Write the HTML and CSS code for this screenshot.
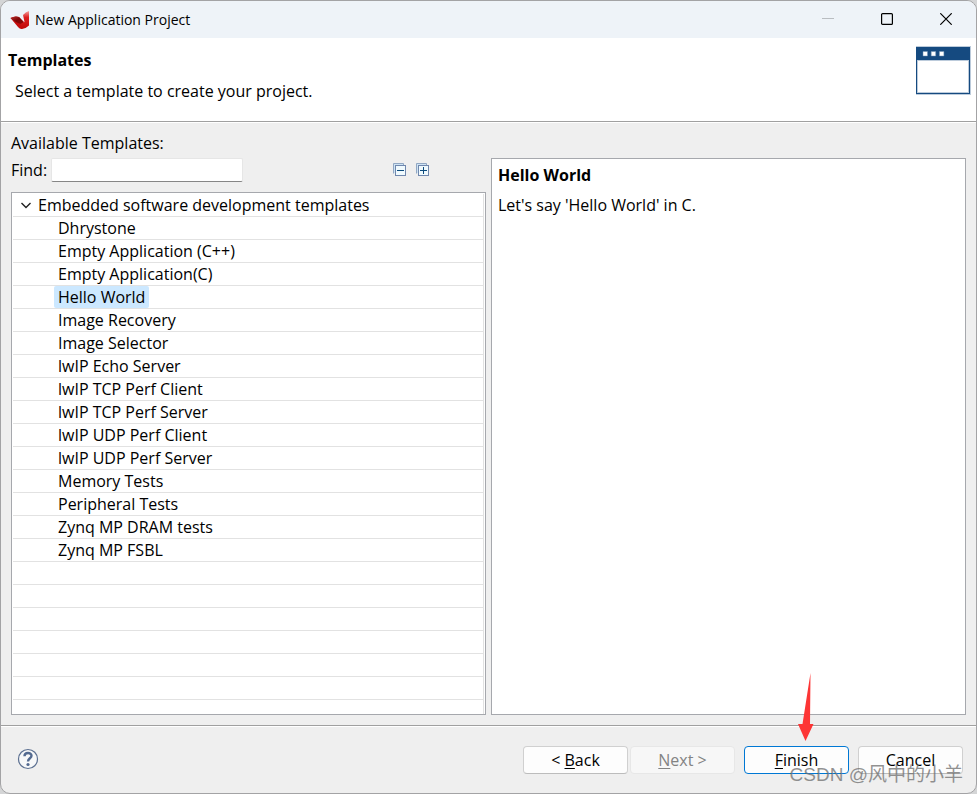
FILE: index.html
```html
<!DOCTYPE html>
<html lang="en">
<head>
<meta charset="utf-8">
<title>New Application Project</title>
<link rel="stylesheet" href="styles.css">
</head>
<body>
<div class="window">
  <header class="titlebar">
    <svg class="app-icon" width="20" height="20" viewBox="0 0 20 20" aria-hidden="true">
      <defs>
        <linearGradient id="red" x1="0" y1="0" x2="0" y2="1"><stop offset="0" stop-color="#f4a0a0"/><stop offset=".35" stop-color="#dc2020"/><stop offset="1" stop-color="#c00808"/></linearGradient>
        <linearGradient id="dark" x1="0" y1="0" x2="1" y2="1"><stop offset="0" stop-color="#b83030"/><stop offset=".5" stop-color="#7c0606"/><stop offset="1" stop-color="#900808"/></linearGradient>
      </defs>
      <path d="M.5 8 Q5 5.500 9 7 L14 12 L12 19 Q10 19.500 8 17Z" fill="#c40c0c"/>
      <path d="M.5 8 Q5 5.500 9 7 L13.500 12 L11 14 Q6 13 .5 8Z" fill="url(#dark)"/>
      <path d="M13 5 Q16 1.500 19 1 V15.500 Q16 18.500 12 19 L10.500 14 L14.500 12Z" fill="url(#red)"/>
    </svg>
    <span class="title">New Application Project</span>
    <div class="controls">
      <button class="control" aria-label="Minimize" disabled><svg width="12" height="12" viewBox="0 0 12 12"><path d="M0 5.500H12" stroke="#b9bdc1"/></svg></button>
      <button class="control" aria-label="Maximize"><svg width="12" height="12" viewBox="0 0 12 12"><rect x=".6" y=".6" width="10.800" height="10.800" rx="1" fill="none" stroke="#000" stroke-width="1.200"/></svg></button>
      <button class="control" aria-label="Close"><svg width="12" height="12" viewBox="0 0 12 12"><path d="M.3 .3L11.700 11.700M11.700 .3L.3 11.700" stroke="#000" stroke-width="1.200"/></svg></button>
    </div>
  </header>

  <section class="banner">
    <div>
      <h1>Templates</h1>
      <p>Select a template to create your project.</p>
    </div>
    <svg width="55" height="49" viewBox="0 0 55 49" aria-hidden="true">
      <rect width="55" height="49" fill="#bccbdb"/>
      <rect y="1" width="54" height="47" fill="#154a80"/>
      <rect x="1" y="14" width="52" height="33" fill="#bccbdb"/>
      <rect x="2" y="15" width="50" height="31" fill="#fff"/>
      <path d="M7 5.500h4.500v4.500H7zM15.200 5.500h4.500v4.500h-4.500zM23.400 5.500h4.500v4.500h-4.500z" fill="#fff" stroke="#6d8fb1" stroke-width=".5"/>
    </svg>
  </section>

  <main class="content">
    <h2>Available Templates:</h2>
    <div class="panes">
      <div class="chooser">
        <div class="toolbar">
          <label for="find">Find:</label>
          <input id="find" type="text">
          <div class="tools">
            <button class="tool" aria-label="Collapse all"><svg width="13" height="13" viewBox="0 0 13 13"><path d="M.5 10.500V.5H10.500V3" fill="#cfe4f4" stroke="#91a7c3"/><rect x="1" y="1" width="9" height="9" fill="#cfe4f4"/><rect x="2.500" y="2.500" width="10" height="10" fill="#f0fafe" stroke="#7087ad"/><path d="M4 7.500H11" stroke="#0b4a7c"/></svg></button>
            <button class="tool" aria-label="Expand all"><svg width="13" height="13" viewBox="0 0 13 13"><path d="M.5 10.500V.5H10.500V3" fill="#cfe4f4" stroke="#91a7c3"/><rect x="1" y="1" width="9" height="9" fill="#cfe4f4"/><rect x="2.500" y="2.500" width="10" height="10" fill="#f0fafe" stroke="#7087ad"/><path d="M4 7.500H11M7.500 4V11" stroke="#0b4a7c"/></svg></button>
          </div>
        </div>
        <ul class="tree" role="tree">
          <li role="treeitem" aria-expanded="true">
            <div class="group"><svg width="12" height="12" viewBox="0 0 12 12" aria-hidden="true"><path d="M1.500 4L6 8.500L10.500 4" fill="none" stroke="#222" stroke-width="1.400"/></svg><span>Embedded software development templates</span></div>
            <ul class="items" role="group">
              <li role="treeitem"><span>Dhrystone</span></li>
              <li role="treeitem"><span>Empty Application (C++)</span></li>
              <li role="treeitem"><span>Empty Application(C)</span></li>
              <li role="treeitem" aria-selected="true"><span class="selected">Hello World</span></li>
              <li role="treeitem"><span>Image Recovery</span></li>
              <li role="treeitem"><span>Image Selector</span></li>
              <li role="treeitem"><span>lwIP Echo Server</span></li>
              <li role="treeitem"><span>lwIP TCP Perf Client</span></li>
              <li role="treeitem"><span>lwIP TCP Perf Server</span></li>
              <li role="treeitem"><span>lwIP UDP Perf Client</span></li>
              <li role="treeitem"><span>lwIP UDP Perf Server</span></li>
              <li role="treeitem"><span>Memory Tests</span></li>
              <li role="treeitem"><span>Peripheral Tests</span></li>
              <li role="treeitem"><span>Zynq MP DRAM tests</span></li>
              <li role="treeitem"><span>Zynq MP FSBL</span></li>
            </ul>
          </li>
        </ul>
      </div>
      <article class="description">
        <h3>Hello World</h3>
        <p>Let's say 'Hello World' in C.</p>
      </article>
    </div>
  </main>

  <footer class="footer">
    <button class="help" aria-label="Help"><svg width="22" height="22" viewBox="0 0 22 22"><circle cx="11" cy="11" r="9.500" fill="#f7f8f9" stroke="#5c7091" stroke-width="1.200"/><path d="M7.500 8.300C7.500 4 14.500 4 14.500 7.800C14.500 10.300 11 10.300 11 13.500" fill="none" stroke="#536a90" stroke-width="2.400"/><circle cx="11" cy="16.500" r="1.600" fill="#536a90"/></svg></button>
    <div class="pair">
      <button class="btn">&lt; <u>B</u>ack</button>
      <button class="btn" disabled><u>N</u>ext &gt;</button>
    </div>
    <button class="btn primary"><u>F</u>inish</button>
    <button class="btn">Cancel</button>
  </footer>

  <svg class="arrow" width="16" height="68" viewBox="0 0 16 68" aria-hidden="true"><path d="M12.500 0L12 51H15.500L7.500 68L0 51H4.500Z" fill="#fd3535"/></svg>
  <div class="watermark">CSDN @风中的小羊</div>
</div>
</body>
</html>
```
FILE: styles.css
```css
* {
  box-sizing: border-box;
}

body {
  margin: 0;
  background: #d4d5d6;
  color: #000;
  font: 16px/22px "Open Sans", "Noto Sans", "Noto Sans CJK SC", sans-serif;
}

h1, h2, h3, p, ul {
  margin: 0;
  padding: 0;
}

h1, h2, h3 {
  font-size: 16px;
}

ul {
  list-style: none;
}

button {
  font: inherit;
  padding: 0;
  border: 0;
  background: none;
}

svg {
  display: block;
}

.window {
  position: relative;
  display: flex;
  flex-direction: column;
  min-height: 100vh;
  border: 1px solid #a3a3a5;
  border-radius: 10px;
  background: #efefef;
  overflow: hidden;
}

.titlebar {
  display: flex;
  align-items: center;
  height: 37px;
  padding: 0 1px 0 9px;
  background: #eef3f8;
}

.title {
  margin-left: 5px;
  font-size: 14px;
}

.controls {
  display: flex;
  margin-left: auto;
}

.control {
  display: grid;
  place-items: center;
  width: 59px;
  height: 34px;
  margin-bottom: 2px;
}

.banner {
  display: flex;
  justify-content: space-between;
  align-items: flex-start;
  height: 84px;
  padding: 8px 5px 0 7px;
  border-bottom: 1px solid #a0a0a0;
  background: #fff;
}

.banner h1 {
  margin-top: 3px;
}

.banner p {
  margin: 9px 0 0 7px;
}

.content {
  display: flex;
  flex: 1;
  flex-direction: column;
  padding: 9px 10px 10px;
  border-top: 1px solid #fff;
}

.content h2 {
  font-weight: 400;
}

.panes {
  display: grid;
  flex: 1;
  grid-template-columns: 1fr 1fr;
  gap: 5px;
  margin-top: 4px;
}

.chooser {
  display: flex;
  flex-direction: column;
}

.toolbar {
  display: flex;
  align-items: center;
  height: 24px;
  margin-bottom: 10px;
}

.toolbar input {
  width: 192px;
  height: 24px;
  margin-left: 4px;
  border: 1px solid #e6e6e6;
  border-bottom-color: #868686;
  border-radius: 2px;
  background: #fff;
  font: inherit;
}

.tools {
  display: flex;
  gap: 10px;
  margin: 0 57px 2px auto;
}

.tree {
  flex: 1;
  padding: 1px 1px 0 1px;
  border: 1px solid #a6a8ad;
  background: repeating-linear-gradient(#fff 0 22px, #e2e2e2 22px 23px) content-box, #fff;
}

.tree > li {
  height: 100%;
  border-right: 1px solid #e2e2e2;
}

.group {
  display: flex;
  align-items: center;
  gap: 6px;
  height: 22px;
  margin-bottom: 1px;
  padding-left: 7px;
}

.items li {
  height: 23px;
  padding-left: 41px;
}

.items span {
  display: inline-block;
  padding: 0 4px;
}

.items .selected {
  border-radius: 2px;
  background: #cce8ff;
}

.description {
  padding: 5px 6px;
  border: 1px solid #a6a8ad;
  background: #fff;
}

.description p {
  margin-top: 8px;
}

.footer {
  display: flex;
  align-items: center;
  gap: 9px;
  height: 68px;
  padding: 0 13px 0 16px;
  border-top: 1px solid #a0a0a0;
  box-shadow: inset 0 1px #fff;
}

.help {
  margin-bottom: 2px;
}

.pair {
  display: flex;
  gap: 2px;
  margin-left: auto;
}

.btn {
  width: 105px;
  height: 28px;
  border: 1px solid #d0d0d0;
  border-bottom-color: #bcbcbc;
  border-radius: 4px;
  background: #fdfdfd;
  color: #000;
}

.btn:disabled {
  border-color: #e7e7e7;
  background: #f7f7f7;
  color: #838383;
}

.btn.primary {
  border-color: #0078d4;
}

.btn u {
  text-underline-offset: 2px;
}

.arrow {
  position: absolute;
  right: 162px;
  bottom: 52px;
}

.watermark {
  position: absolute;
  right: 13px;
  bottom: 5px;
  color: rgba(110, 110, 110, 0.75);
  font: 19px/26px "Liberation Sans", "Noto Sans CJK SC", sans-serif;
  white-space: nowrap;
  pointer-events: none;
}
```
